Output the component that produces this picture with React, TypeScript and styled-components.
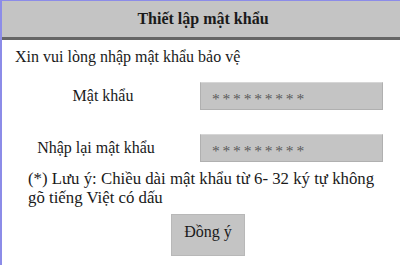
import React from 'react';
import styled, { createGlobalStyle } from 'styled-components';

const GlobalStyle = createGlobalStyle`
  html, body {
    margin: 0;
    padding: 0;
    background: #fff;
  }
`;

const Frame = styled.div`
  width: 398px;
  height: 264px;
  border-left: 2px solid #8c8ce8;
  border-top: 1px solid #8c8ce8;
  display: flex;
  flex-direction: column;
  overflow: hidden;
  font-family: 'Liberation Serif', serif;
  color: #1a1a1a;
`;

const Header = styled.div`
  height: 36px;
  background: #c4c4c4;
  border-bottom: 3px solid #666;
  display: flex;
  align-items: center;
  justify-content: center;
  font-size: 16px;
  font-weight: bold;
  padding-left: 4px;
`;

const Intro = styled.p`
  margin: 7px 0 0 13px;
  font-size: 16px;
  line-height: 20px;
`;

const Form = styled.div`
  display: grid;
  grid-template-columns: 198px 183px;
  row-gap: 24px;
  margin-top: 15px;
  align-items: center;
`;

const Label = styled.label<{ $shift?: number }>`
  text-align: center;
  font-size: 16px;
  padding-left: 4px;
  padding-right: ${({ $shift }) => $shift ?? 0}px;
`;

const Field = styled.div`
  background: #c4c4c4;
  border: 1px solid #b0b0b0;
  border-top-color: #d6d6d6;
  display: flex;
  align-items: center;
  padding-left: 11px;
  padding-top: 5px;
  height: 21px;
  font-size: 15.5px;
  letter-spacing: 2.8px;
  color: #5a5a5a;
`;

const Note = styled.p`
  margin: 7px 6px 0 26px;
  font-size: 16.8px;
  line-height: 19px;
`;

const Actions = styled.div`
  display: flex;
  justify-content: center;
  margin-top: 7px;
  padding-left: 14px;
`;

const Button = styled.button`
  width: 74px;
  height: 42px;
  background: #c4c4c4;
  border: 1px solid #b8b8b8;
  font-family: 'Liberation Serif', serif;
  font-size: 16px;
  color: #1a1a1a;
  padding: 0 0 6px;
`;

export default function App() {
  return (
    <>
      <GlobalStyle />
      <Frame>
        <Header>Thiết lập mật khẩu</Header>
        <Intro>Xin vui lòng nhập mật khẩu bảo vệ</Intro>
        <Form>
          <Label>Mật khẩu</Label>
          <Field>*********</Field>
          <Label $shift={14}>Nhập lại mật khẩu</Label>
          <Field>*********</Field>
        </Form>
        <Note>
          (*) Lưu ý: Chiều dài mật khẩu từ 6- 32 ký tự không gõ tiếng Việt có dấu
        </Note>
        <Actions>
          <Button>Đồng ý</Button>
        </Actions>
      </Frame>
    </>
  );
}
